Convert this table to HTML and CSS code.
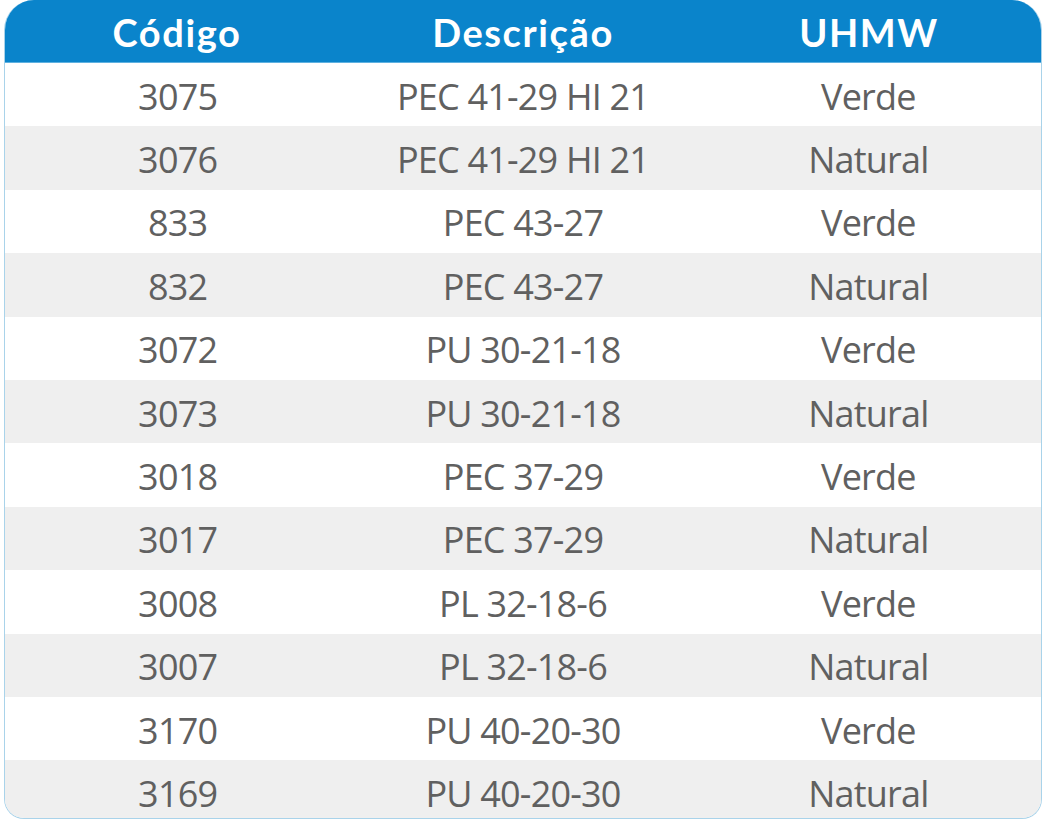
FILE: index.html
```html
<!DOCTYPE html>
<html lang="pt">
<head>
<meta charset="utf-8">
<link rel="stylesheet" href="styles.css">
</head>
<body>
<div class="table">
  <div class="row head"><div>Código</div><div>Descrição</div><div>UHMW</div></div>
  <div class="row"><div>3075</div><div>PEC 41-29 HI 21</div><div>Verde</div></div>
  <div class="row alt"><div>3076</div><div>PEC 41-29 HI 21</div><div>Natural</div></div>
  <div class="row"><div>833</div><div>PEC 43-27</div><div>Verde</div></div>
  <div class="row alt"><div>832</div><div>PEC 43-27</div><div>Natural</div></div>
  <div class="row"><div>3072</div><div>PU 30-21-18</div><div>Verde</div></div>
  <div class="row alt"><div>3073</div><div>PU 30-21-18</div><div>Natural</div></div>
  <div class="row"><div>3018</div><div>PEC 37-29</div><div>Verde</div></div>
  <div class="row alt"><div>3017</div><div>PEC 37-29</div><div>Natural</div></div>
  <div class="row"><div>3008</div><div>PL 32-18-6</div><div>Verde</div></div>
  <div class="row alt"><div>3007</div><div>PL 32-18-6</div><div>Natural</div></div>
  <div class="row"><div>3170</div><div>PU 40-20-30</div><div>Verde</div></div>
  <div class="row alt"><div>3169</div><div>PU 40-20-30</div><div>Natural</div></div>
</div>
</body>
</html>
```
FILE: styles.css
```css
html, body {
  margin: 0;
  padding: 0;
  background: #ffffff;
}
body {
  padding: 0 2px 0 4px;
  width: 1038px;
}
.table {
  width: 1038px;
  height: 819px;
  box-sizing: border-box;
  border: 1px solid #a9d3ea;
  border-top: none;
  border-radius: 30px 30px 20px 20px;
  overflow: hidden;
  display: flex;
  flex-direction: column;
  font-family: "Open Sans", "Noto Sans", sans-serif;
}
.row {
  display: grid;
  grid-template-columns: 1fr 1fr 1fr;
  height: 63.4px;
  flex: none;
  align-items: center;
  text-align: center;
  color: #606060;
  font-size: 36px;
  letter-spacing: -0.8px;
  background: #ffffff;
}
.row.alt {
  background: #efefef;
}
.row > div {
  line-height: 1;
  padding-top: 4px;
}
.row.head {
  height: 62px;
  background: #0a84cb;
  color: #ffffff;
  font-family: "Lato", "Inter", sans-serif;
  font-weight: 700;
  font-size: 38px;
  letter-spacing: 1.6px;
  border-bottom: 1px solid #5fb1e0;
  margin: 0 -1px;
}
.row.head > div {
  padding-top: 2px;
}
```
